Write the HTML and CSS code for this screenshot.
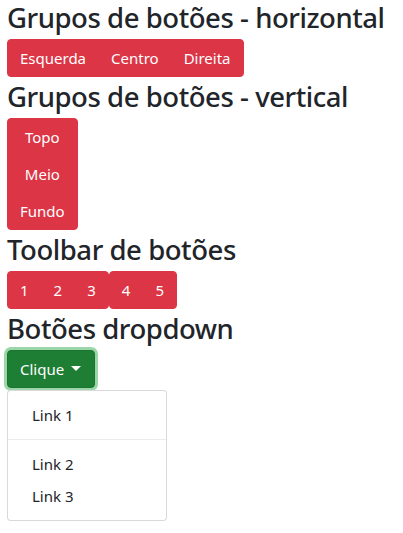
FILE: index.html
```html
<!DOCTYPE html>
<html lang="pt">
<head>
<meta charset="utf-8">
<title>Botões</title>
<link rel="stylesheet" href="styles.css">
</head>
<body>
<main class="page">
  <h2 class="title">Grupos de botões - horizontal</h2>
  <div class="btn-group">
    <button class="btn btn-danger">Esquerda</button>
    <button class="btn btn-danger">Centro</button>
    <button class="btn btn-danger">Direita</button>
  </div>

  <h2 class="title">Grupos de botões - vertical</h2>
  <div class="btn-group-vertical">
    <button class="btn btn-danger">Topo</button>
    <button class="btn btn-danger">Meio</button>
    <button class="btn btn-danger">Fundo</button>
  </div>

  <h2 class="title">Toolbar de botões</h2>
  <div class="btn-toolbar">
    <div class="btn-group">
      <button class="btn btn-danger">1</button>
      <button class="btn btn-danger">2</button>
      <button class="btn btn-danger">3</button>
    </div>
    <div class="btn-group">
      <button class="btn btn-danger">4</button>
      <button class="btn btn-danger">5</button>
    </div>
  </div>

  <h2 class="title">Botões dropdown</h2>
  <div class="dropdown">
    <button class="btn btn-success btn-focus dropdown-toggle">Clique</button>
    <div class="dropdown-menu">
      <a class="dropdown-item" href="#">Link 1</a>
      <div class="dropdown-divider"></div>
      <a class="dropdown-item" href="#">Link 2</a>
      <a class="dropdown-item" href="#">Link 3</a>
    </div>
  </div>
</main>
</body>
</html>
```
FILE: styles.css
```css
html, body {
  margin: 0;
  padding: 0;
  background: #fff;
}
body {
  font-family: "Noto Sans", "Open Sans", sans-serif;
  font-size: 16px;
  color: #212529;
}
.page {
  padding: 0 7px;
  display: flex;
  flex-direction: column;
  align-items: flex-start;
}
.title {
  margin: 2px 0 3px;
  font-size: 27.5px;
  letter-spacing: -0.45px;
  font-weight: 500;
  line-height: 36px;
  color: #212529;
  white-space: nowrap;
}
.title:first-child {
  margin-top: 0;
}
.btn {
  font-family: inherit;
  font-size: 15px;
  line-height: 24px;
  padding: 6px 12px;
  border: 1px solid transparent;
  border-radius: 4px;
  cursor: pointer;
  margin: 0;
}
.btn-danger {
  background: #dc3545;
  border-color: #dc3545;
  color: #fff;
}
.btn-success {
  background: #1e7e34;
  border-color: #1c7430;
  color: #fff;
  padding-right: 13px;
}
.btn-focus {
  box-shadow: 0 0 0 3px rgba(72, 180, 97, 0.55);
}
.btn-group {
  display: flex;
}
.btn-group .btn + .btn {
  margin-left: -1px;
}
.btn-group .btn:not(:first-child) {
  border-top-left-radius: 0;
  border-bottom-left-radius: 0;
}
.btn-group .btn:not(:last-child) {
  border-top-right-radius: 0;
  border-bottom-right-radius: 0;
}
.btn-group-vertical {
  display: flex;
  flex-direction: column;
  align-items: stretch;
}
.btn-group-vertical .btn + .btn {
  margin-top: -1px;
}
.btn-group-vertical .btn:not(:first-child) {
  border-top-left-radius: 0;
  border-top-right-radius: 0;
}
.btn-group-vertical .btn:not(:last-child) {
  border-bottom-left-radius: 0;
  border-bottom-right-radius: 0;
}
.btn-toolbar {
  display: flex;
}
.dropdown {
  display: flex;
  flex-direction: column;
  align-items: flex-start;
}
.dropdown-toggle::after {
  content: "";
  display: inline-block;
  margin-left: 7px;
  vertical-align: 4px;
  border-top: 5px solid #fff;
  border-right: 5px solid transparent;
  border-left: 5px solid transparent;
}
.dropdown-menu {
  margin-top: 2px;
  min-width: 160px;
  padding: 8px 0;
  border: 1px solid rgba(0, 0, 0, 0.15);
  border-radius: 4px;
  background: #fff;
  box-sizing: border-box;
  display: flex;
  flex-direction: column;
}
.dropdown-item {
  display: block;
  padding: 4px 24px;
  line-height: 24px;
  font-size: 15px;
  color: #212529;
  text-decoration: none;
}
.dropdown-divider {
  height: 0;
  margin: 8px 0;
  border-top: 1px solid #e9ecef;
}
```
